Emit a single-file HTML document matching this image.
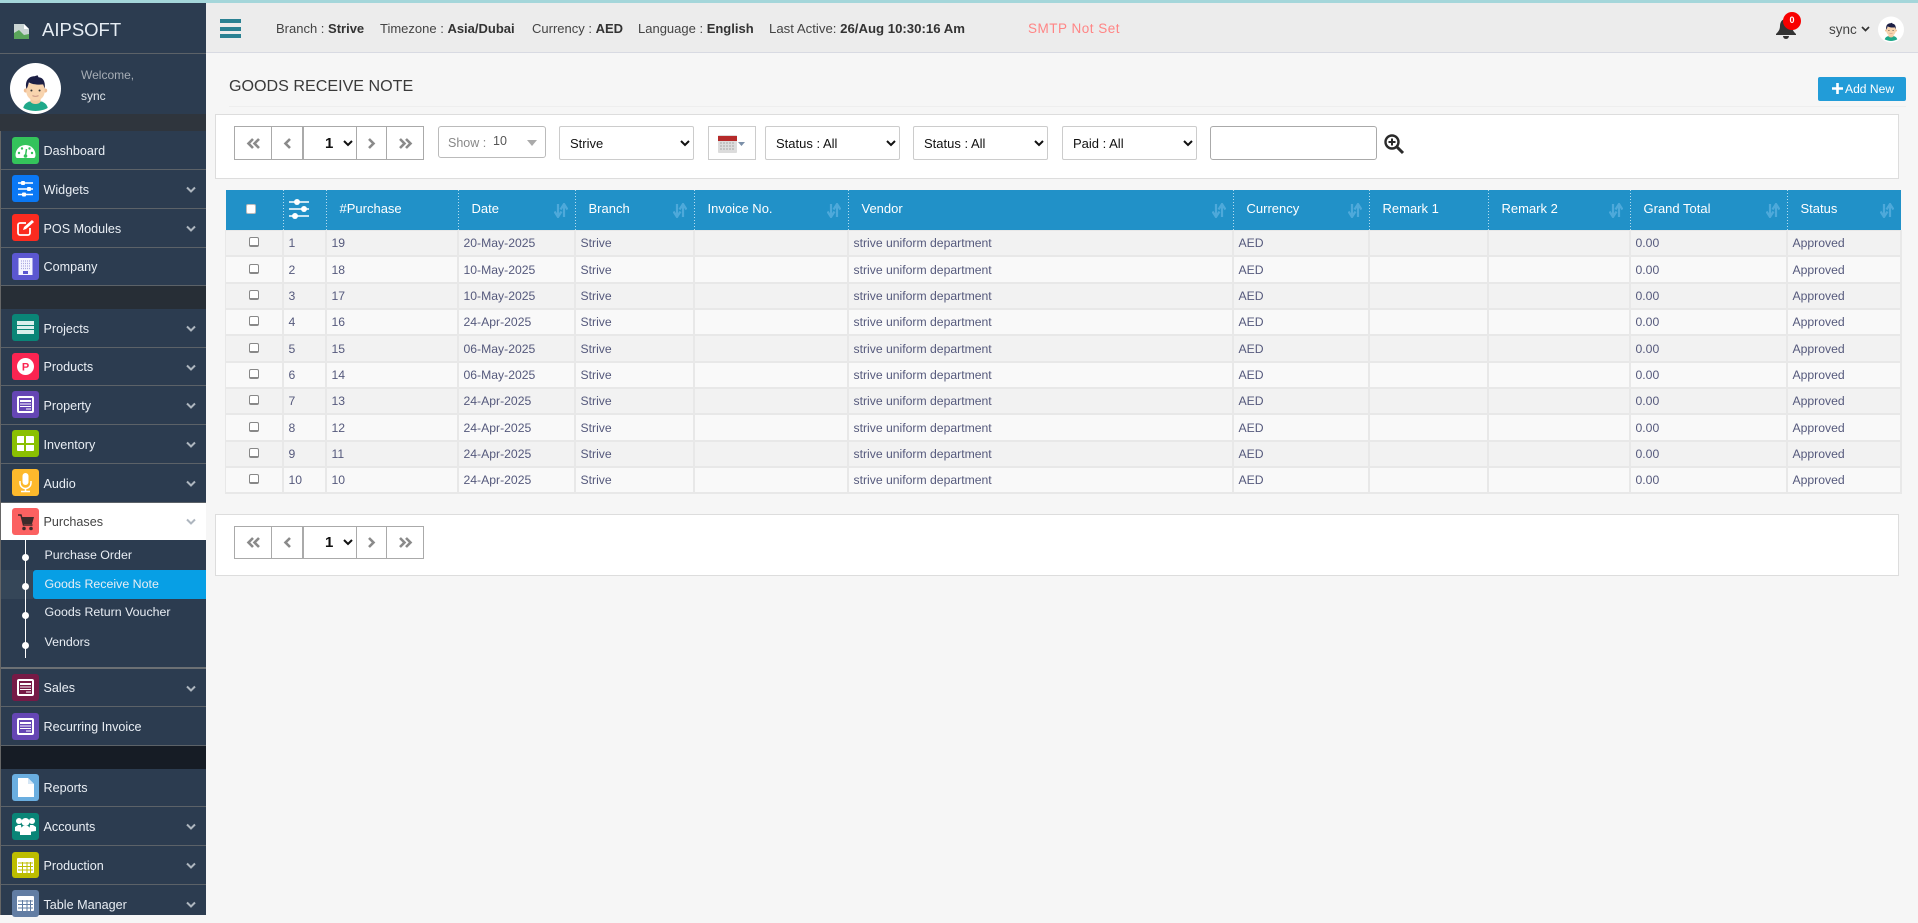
<!DOCTYPE html>
<html><head><meta charset="utf-8"><title>Goods Receive Note</title>
<style>
*{box-sizing:border-box}
html,body{margin:0;padding:0;width:1918px;height:915px;overflow:hidden;background:#f6f6f6;font-family:"Liberation Sans",sans-serif;color:#333}
.a{position:absolute}
#sb{position:absolute;left:0;top:3px;width:206px;height:912px;background:#2c3c50}
.m{position:absolute;left:1px;width:205px;border-bottom:1px solid #5c6268;background:#2c3c50;color:#e9eef4;font-size:12.6px}
.m .t{position:absolute;left:42.5px;top:0;bottom:0;padding-top:1px;display:flex;align-items:center;white-space:nowrap}
.ic{position:absolute;left:11px;top:5px;width:27px;height:27px;border-radius:3px}
.ic svg{position:absolute;left:0;top:0;width:27px;height:27px}
.cv{position:absolute;left:185px;top:16px;width:10px;height:7px}
.sub{position:absolute;left:44.500px;color:#e9eef4;font-size:12.400px;white-space:nowrap}
.tb{position:absolute;top:21px;font-size:13px;color:#444;white-space:nowrap}
.tb b{color:#333}
.pg{position:absolute;height:34px;background:#fff;border:1px solid #aaa;display:flex;align-items:center;justify-content:center}
select{position:absolute;height:34px;background:#fff;border:1px solid #ccc;border-radius:2px;font:13px "Liberation Sans",sans-serif;color:#111;padding-left:6px}
table{position:absolute;left:225px;top:190px;width:1675px;table-layout:fixed;border-collapse:collapse;font-size:12.2px;color:#55597c}
th{height:40px;background:#2191c8;color:#fff;font-weight:normal;font-size:13px;text-align:left;padding:0 0 2px 14px;position:relative}
th::before{content:"";position:absolute;left:0;top:0;width:1px;height:40px;background:repeating-linear-gradient(#b5dcf0 0 1px,transparent 1px 3px)}
th:first-child::before{display:none}
td{height:26.35px;padding:0 0 0 5px;border:1px solid #e8e8e8;border-width:1px 2px 2px 1px;white-space:nowrap;overflow:hidden}
tr:nth-child(odd) td{background:#f2f2f2}
tr:nth-child(even) td{background:#f9f9f9}
td:first-child{text-align:center;padding:0}
.cb{display:inline-block;width:10px;height:10px;border:1px solid #888;border-bottom-width:2px;border-radius:2px;background:#fff;vertical-align:-1px;position:relative;top:-1px}
.so{position:absolute;right:7px;top:13px;width:14px;height:15px}
</style></head><body>
<svg width="0" height="0" style="position:absolute">
<defs>
<symbol id="av" viewBox="0 0 50 50">
<circle cx="25" cy="25" r="25" fill="#fff"/>
<path d="M13 44c1-5 6-7 12-7s11 2 12 7c-3 2-8 3-12 3s-9-1-12-3z" fill="#1fa98a"/>
<path d="M20 33h10v5c-2 3-8 3-10 0z" fill="#f3c9a0"/>
<circle cx="15.500" cy="27" r="2" fill="#eebd94"/><circle cx="34.500" cy="27" r="2" fill="#eebd94"/>
<path d="M16 20h18v8c0 5-4 9-9 9s-9-4-9-9z" fill="#f8d4ae"/>
<path d="M16 25c-1.500-7 2-12 8-12l3-1 1 2c4 0 7 4 6 11l-1.500-4c-5 .5-11 0-14-2-.5 2-1 4-2 6z" fill="#1c1f45"/>
<circle cx="21" cy="27" r="1" fill="#333"/><circle cx="29" cy="27" r="1" fill="#333"/>
<path d="M22 32q3 1.500 6 0" stroke="#c98" fill="none"/>
</symbol>
<symbol id="cv" viewBox="0 0 10 7"><path d="M1 1.500l4 4 4-4" fill="none" stroke="#aeb6bf" stroke-width="2"/></symbol>
<symbol id="so" viewBox="0 0 14 15"><path d="M4 1v11M.5 8.500L4 14l3.500-5.500M10 14V3M6.500 6.500L10 1l3.500 5.500" fill="none" stroke="#4ea9da" stroke-width="2.200"/></symbol>
<symbol id="doc" viewBox="0 0 27 27"><rect x="6" y="6" width="15" height="15" rx="1" fill="none" stroke="#fff" stroke-width="2"/><path d="M8 9h11v2H8z" fill="#fff"/><path d="M8 13h11M8 15.500h11M14 18h5" stroke="#fff"/></symbol>
</defs></svg>

<div class="a" style="left:0;top:0;width:1918px;height:3px;background:#a4d6da"></div>

<!-- Sidebar -->
<div id="sb"></div>
<svg class="a" style="left:14px;top:24px" width="15" height="15" viewBox="0 0 15 15"><path d="M0 0h10l5 5v10H0z" fill="#c9d4d2"/><path d="M0 15V9l5-3 5 5 5-1v5z" fill="#5aa55a"/><path d="M10 0v5h5z" fill="#fff"/></svg>
<div class="a" style="left:42px;top:19px;font-size:18.500px;color:#e6edf4">AIPSOFT</div>
<div class="a" style="left:0;top:53px;width:206px;height:1px;background:#5c6268"></div>
<svg class="a" style="left:10px;top:63px" width="51" height="51"><use href="#av"/></svg>
<div class="a" style="left:81px;top:68px;font-size:12px;color:#a6adb5">Welcome,</div>
<div class="a" style="left:81px;top:89px;font-size:12px;color:#dfe5ea">sync</div>
<div class="a" style="left:0;top:114px;width:206px;height:17px;background:#2f353d"></div>
<div class="a" style="left:0;top:286px;width:206px;height:23px;background:#272e36"></div>
<div class="a" style="left:0;top:746px;width:206px;height:23px;background:#161c25"></div>
<div class="a" style="left:0;top:131px;width:1px;height:530px;background:#666"></div>
<div class="a" style="left:0;top:660px;width:1px;height:255px;background:#666"></div>

<div class="m" style="top:131px;height:39px"><div class="ic" style="background:#34c35b;top:6px"><svg viewBox="0 0 27 27"><path d="M3.500 18a10 10 0 0 1 20 0c0 1-.5 3-1.500 3H5c-1 0-1.500-2-1.500-3z" fill="#fff"/><path d="M13.500 19l1-7" stroke="#34c35b" stroke-width="1.500"/><circle cx="13.500" cy="19" r="1.800" fill="#34c35b"/><circle cx="7" cy="16" r="1.200" fill="#34c35b"/><circle cx="20" cy="16" r="1.200" fill="#34c35b"/><circle cx="10" cy="11.500" r="1.200" fill="#34c35b"/><circle cx="17.500" cy="11.500" r="1.200" fill="#34c35b"/></svg></div><div class="t">Dashboard</div></div>
<div class="m" style="top:170px;height:39px"><div class="ic" style="background:#0a78f5"><svg viewBox="0 0 27 27"><path d="M6 8h15M6 14h15M6 19.500h15" stroke="#fff" stroke-width="1.500"/><rect x="9" y="6" width="4" height="4" rx="1" fill="#fff"/><rect x="15" y="12" width="4" height="4" rx="1" fill="#fff"/><rect x="10" y="17.500" width="4" height="4" rx="1" fill="#fff"/></svg></div><div class="t">Widgets</div><svg class="cv"><use href="#cv"/></svg></div>
<div class="m" style="top:209px;height:39px"><div class="ic" style="background:#fb2b20"><svg viewBox="0 0 27 27"><path d="M18 14v5a2 2 0 0 1-2 2H8a2 2 0 0 1-2-2v-8a2 2 0 0 1 2-2h6" fill="none" stroke="#fff" stroke-width="1.800"/><path d="M11 16l1-3 8-7 2 2-8 7z" fill="#fff"/></svg></div><div class="t">POS Modules</div><svg class="cv"><use href="#cv"/></svg></div>
<div class="m" style="top:248px;height:38px"><div class="ic" style="background:#5b57d1"><svg viewBox="0 0 27 27"><rect x="6.500" y="5" width="14" height="17" fill="#f4f4ff"/><path d="M9 8h9M9 10.500h9M9 13h9M9 15.500h9" stroke="#aaa8e0" stroke-width="1.200" stroke-dasharray="1 1"/><rect x="11" y="18" width="5" height="3" fill="#5b57d1"/></svg></div><div class="t">Company</div></div>

<div class="m" style="top:309px;height:39px"><div class="ic" style="background:#0a8577"><svg viewBox="0 0 27 27"><path d="M5 7h17v4H5zM5 12h17v3H5zM5 16h17v4H5z" fill="#d9efec"/></svg></div><div class="t">Projects</div><svg class="cv"><use href="#cv"/></svg></div>
<div class="m" style="top:348px;height:38px"><div class="ic" style="background:#fb2451"><svg viewBox="0 0 27 27"><circle cx="13.500" cy="13.500" r="8.500" fill="#fff"/><text x="13.500" y="17.500" text-anchor="middle" font-family="Liberation Sans" font-weight="bold" font-size="11" fill="#fb2451">P</text></svg></div><div class="t">Products</div><svg class="cv"><use href="#cv"/></svg></div>
<div class="m" style="top:386px;height:39px"><div class="ic" style="background:#6546b4"><svg><use href="#doc"/></svg></div><div class="t">Property</div><svg class="cv"><use href="#cv"/></svg></div>
<div class="m" style="top:425px;height:39px"><div class="ic" style="background:#8ac002;top:5px"><svg viewBox="0 0 27 27"><path d="M5 7a1 1 0 0 1 1-1h6v7H5zM14 6h7a1 1 0 0 1 1 1v6h-8zM5 15h7v6H6a1 1 0 0 1-1-1zM14 15h8v5a1 1 0 0 1-1 1h-7z" fill="#fff"/></svg></div><div class="t">Inventory</div><svg class="cv"><use href="#cv"/></svg></div>
<div class="m" style="top:464px;height:39px"><div class="ic" style="background:#fdb92c"><svg viewBox="0 0 27 27"><rect x="10.500" y="4" width="6" height="12" rx="3" fill="#fff"/><path d="M8 12v2a5.500 5.500 0 0 0 11 0v-2M13.500 19.500V22M9 22.500h9" fill="none" stroke="#fff" stroke-width="1.500"/></svg></div><div class="t">Audio</div><svg class="cv"><use href="#cv"/></svg></div>
<div class="m" style="top:503px;height:37px;background:#fff;color:#444;border:0"><div class="ic" style="background:#fb6161"><svg viewBox="0 0 27 27"><path d="M6 7h3l1 2h12l-2 7H11L9 8" fill="#3c2b2b"/><path d="M6 7h3l2.500 10h9" fill="none" stroke="#3c2b2b" stroke-width="1.500"/><circle cx="12" cy="20.500" r="1.800" fill="#3c2b2b"/><circle cx="19" cy="20.500" r="1.800" fill="#3c2b2b"/></svg></div><div class="t" style="padding-top:0">Purchases</div><svg class="cv" style="top:15px"><use href="#cv"/></svg></div>

<div class="a" style="left:1px;top:570px;width:32px;height:29px;background:#354658"></div>
<div class="a" style="left:33px;top:570px;width:173px;height:29px;background:#079fe5;border-radius:3px 0 0 3px"></div>
<div class="a" style="left:25px;top:540px;width:1px;height:118px;background:#fff"></div>
<div class="a" style="left:22px;top:554px;width:7px;height:7px;border-radius:50%;background:#fff"></div>
<div class="a" style="left:22px;top:583px;width:7px;height:7px;border-radius:50%;background:#fff"></div>
<div class="a" style="left:22px;top:612px;width:7px;height:7px;border-radius:50%;background:#fff"></div>
<div class="a" style="left:22px;top:642px;width:7px;height:7px;border-radius:50%;background:#fff"></div>
<div class="sub" style="top:548px">Purchase Order</div>
<div class="sub" style="top:577px">Goods Receive Note</div>
<div class="sub" style="top:605px">Goods Return Voucher</div>
<div class="sub" style="top:635px">Vendors</div>
<div class="a" style="left:1px;top:667px;width:205px;height:2px;background:#6c7074"></div>

<div class="m" style="top:669px;height:38px"><div class="ic" style="background:#761a46"><svg><use href="#doc"/></svg></div><div class="t" style="padding-top:0">Sales</div><svg class="cv"><use href="#cv"/></svg></div>
<div class="m" style="top:707px;height:39px"><div class="ic" style="background:#6546b4;top:6px"><svg><use href="#doc"/></svg></div><div class="t">Recurring Invoice</div></div>
<div class="m" style="top:769px;height:38px"><div class="ic" style="background:#6aaee0"><svg viewBox="0 0 27 27"><path d="M6 4h10l6 6v13H6z" fill="#fff"/><path d="M16 4l6 6h-6z" fill="#d4e6f5"/></svg></div><div class="t" style="padding-top:0">Reports</div></div>
<div class="m" style="top:807px;height:39px"><div class="ic" style="background:#0a8577;top:6px"><svg viewBox="0 0 27 27"><circle cx="7" cy="8" r="3" fill="#fff"/><circle cx="20" cy="8" r="3" fill="#fff"/><circle cx="13.500" cy="9" r="4" fill="#fff"/><path d="M3 18v-4l3-2h3l1 7zM24 18v-4l-3-2h-3l-1 7z" fill="#fff"/><path d="M8 22v-6l3-3h5l3 3v6z" fill="#fff"/></svg></div><div class="t">Accounts</div><svg class="cv"><use href="#cv"/></svg></div>
<div class="m" style="top:846px;height:39px"><div class="ic" style="background:#bcbd00;top:6px;height:26px"><svg viewBox="0 0 27 27"><rect x="5" y="6" width="17" height="15" rx="1" fill="#fff"/><path d="M6 11h15M6 14.500h15M6 18h15M10.500 10v11M15 10v11M18.500 10v11" stroke="#bcbd00"/></svg></div><div class="t">Production</div><svg class="cv"><use href="#cv"/></svg></div>
<div class="m" style="top:885px;height:30px;border:0"><div class="ic" style="background:#627da3"><svg viewBox="0 0 27 27"><rect x="5" y="6" width="17" height="15" rx="1" fill="#fff"/><path d="M6 11h15M6 14.500h15M6 18h15M10.500 10v11M15 10v11M18.500 10v11" stroke="#627da3"/></svg></div><div class="t" style="bottom:0;top:0;height:38px">Table Manager</div><svg class="cv"><use href="#cv"/></svg></div>

<!-- Topbar -->
<div class="a" style="left:206px;top:3px;width:1712px;height:50px;background:#ececec;border-bottom:1px solid #d8dae2"></div>
<div class="a" style="left:220px;top:19px;width:21px;height:4px;background:#2a8192"></div>
<div class="a" style="left:220px;top:27px;width:21px;height:4px;background:#2a8192"></div>
<div class="a" style="left:220px;top:34px;width:21px;height:4px;background:#2a8192"></div>
<div class="tb" style="left:276px">Branch : <b>Strive</b></div>
<div class="tb" style="left:380px">Timezone : <b>Asia/Dubai</b></div>
<div class="tb" style="left:532px">Currency : <b>AED</b></div>
<div class="tb" style="left:638px">Language : <b>English</b></div>
<div class="tb" style="left:769px;font-size:13.200px">Last Active: <b>26/Aug 10:30:16 Am</b></div>
<div class="a" style="left:1028px;top:21px;font-size:13.500px;color:#ff8585;letter-spacing:.5px;white-space:nowrap">SMTP Not Set</div>
<svg class="a" style="left:1775px;top:18px" width="23" height="21" viewBox="0 0 23 21"><path d="M11 1c-4 0-6 3-6 7 0 4-2 6-4 8v1h20v-1c-2-2-4-4-4-8 0-4-2-7-6-7z" fill="#333"/><path d="M8 18a3 3 0 0 0 6 0z" fill="#333"/></svg>
<div class="a" style="left:1783px;top:12px;width:18px;height:18px;border-radius:50%;background:#f80000;color:#fff;font-size:9px;font-weight:bold;text-align:center;line-height:17px">0</div>
<div class="a" style="left:1829px;top:22px;font-size:13.500px;color:#444">sync</div>
<svg class="a" style="left:1861px;top:26px" width="9" height="6" viewBox="0 0 9 6"><path d="M1 1l3.500 3.500L8 1" fill="none" stroke="#333" stroke-width="1.700"/></svg>
<svg class="a" style="left:1878px;top:16px" width="26" height="27"><use href="#av"/></svg>

<!-- Heading -->
<div class="a" style="left:229px;top:77px;font-size:16.100px;color:#3a3a3a;white-space:nowrap">GOODS RECEIVE NOTE</div>
<div class="a" style="left:229px;top:106px;width:1677px;height:1px;background:#eeeeee"></div>
<div class="a" style="left:1818px;top:77px;width:88px;height:24px;background:#229cd8;border-radius:2px"></div>
<svg class="a" style="left:1832px;top:83px" width="11" height="11" viewBox="0 0 11 11"><path d="M5.500 0v11M0 5.500h11" stroke="#fff" stroke-width="2.600"/></svg>
<div class="a" style="left:1845px;top:77px;color:#fff;font-size:12.100px;line-height:24px;white-space:nowrap">Add New</div>

<!-- Toolbar panel -->
<div class="a" style="left:215px;top:114px;width:1684px;height:65px;background:#fff;border:1px solid #ddd"></div>
<div class="pg" style="left:234px;top:126px;width:38px"><svg width="15" height="11" viewBox="0 0 15 11"><path d="M7 1L2.500 5.500 7 10M13 1L8.500 5.500 13 10" fill="none" stroke="#8a8a8a" stroke-width="2.600"/></svg></div>
<div class="pg" style="left:271px;top:126px;width:33px;border-right-width:2px"><svg width="9" height="11" viewBox="0 0 9 11"><path d="M7 1L2.500 5.500 7 10" fill="none" stroke="#8a8a8a" stroke-width="2.600"/></svg></div>
<select style="left:303px;top:126px;width:54px;border-color:#aaa;border-radius:0;font-size:15px;font-weight:bold;padding-left:17px"><option>1</option></select>
<div class="pg" style="left:356px;top:126px;width:31px"><svg width="9" height="11" viewBox="0 0 9 11"><path d="M2 1l4.500 4.500L2 10" fill="none" stroke="#8a8a8a" stroke-width="2.600"/></svg></div>
<div class="pg" style="left:386px;top:126px;width:38px"><svg width="15" height="11" viewBox="0 0 15 11"><path d="M2 1l4.500 4.500L2 10M8 1l4.500 4.500L8 10" fill="none" stroke="#8a8a8a" stroke-width="2.600"/></svg></div>

<div class="a" style="left:438px;top:126px;width:108px;height:32px;background:#fff;border:1px solid #bbb;border-radius:3px"></div>
<div class="a" style="left:448px;top:136px;font-size:12.500px;color:#888">Show :</div>
<div class="a" style="left:493px;top:134px;font-size:12.500px;color:#555">10</div>
<div class="a" style="left:527px;top:140px;width:0;height:0;border:5px solid transparent;border-top:6px solid #aaa;border-bottom:0"></div>
<select style="left:559px;top:126px;width:135px"><option>Strive</option></select>
<div class="a" style="left:708px;top:126px;width:48px;height:34px;background:#fff;border:1px solid #ccc"></div>
<svg class="a" style="left:718px;top:135px" width="28" height="18" viewBox="0 0 28 18"><rect x="0" y="0" width="19" height="18" rx="1" fill="#dcdcdc"/><rect x="0" y="1" width="19" height="5" fill="#b52a2a"/><path d="M2 8h15M2 11h15M2 14h15" stroke="#a8a8a8" stroke-dasharray="2 1"/><path d="M20 7h7l-3.500 4z" fill="#7b8fa8"/></svg>
<select style="left:765px;top:126px;width:135px;padding-left:6px"><option>Status : All</option></select>
<select style="left:913px;top:126px;width:135px"><option>Status : All</option></select>
<select style="left:1062px;top:126px;width:135px"><option>Paid : All</option></select>
<div class="a" style="left:1210px;top:126px;width:167px;height:34px;background:#fff;border:1px solid #aaa;border-radius:3px"></div>
<svg class="a" style="left:1383px;top:133px" width="22" height="22" viewBox="0 0 22 22"><circle cx="9" cy="9" r="6.500" fill="none" stroke="#2a2a2a" stroke-width="2.400"/><path d="M14 14l6 6" stroke="#2a2a2a" stroke-width="3"/><path d="M5.500 9h7M9 5.500v7" stroke="#2a2a2a" stroke-width="2"/></svg>

<!-- Table -->
<table>
<colgroup><col style="width:57px"><col style="width:43px"><col style="width:132px"><col style="width:117px"><col style="width:119px"><col style="width:154px"><col style="width:385px"><col style="width:136px"><col style="width:119px"><col style="width:142px"><col style="width:157px"><col style="width:114px"></colgroup>
<thead><tr>
<th style="padding:0"><span class="a" style="left:20px;top:14px;width:10px;height:10px;background:#fff;border:1px solid #bbb;border-radius:2px"></span></th>
<th style="padding:0"><svg class="a" style="left:5px;top:8px" width="22" height="22" viewBox="0 0 22 22"><path d="M1 4h20M1 11h20M1 18h20" stroke="#fff" stroke-width="1.400"/><circle cx="9" cy="4" r="3" fill="#fff"/><circle cx="16" cy="11" r="3" fill="#fff"/><circle cx="7" cy="18" r="3" fill="#fff"/></svg></th>
<th>#Purchase</th>
<th>Date<svg class="so"><use href="#so"/></svg></th>
<th>Branch<svg class="so"><use href="#so"/></svg></th>
<th>Invoice No.<svg class="so"><use href="#so"/></svg></th>
<th>Vendor<svg class="so"><use href="#so"/></svg></th>
<th>Currency<svg class="so"><use href="#so"/></svg></th>
<th>Remark 1</th>
<th>Remark 2<svg class="so"><use href="#so"/></svg></th>
<th>Grand Total<svg class="so"><use href="#so"/></svg></th>
<th>Status<svg class="so"><use href="#so"/></svg></th>
</tr></thead>
<tbody>
<tr><td><span class="cb"></span></td><td>1</td><td>19</td><td>20-May-2025</td><td>Strive</td><td></td><td>strive uniform department</td><td>AED</td><td></td><td></td><td>0.00</td><td>Approved</td></tr>
<tr><td><span class="cb"></span></td><td>2</td><td>18</td><td>10-May-2025</td><td>Strive</td><td></td><td>strive uniform department</td><td>AED</td><td></td><td></td><td>0.00</td><td>Approved</td></tr>
<tr><td><span class="cb"></span></td><td>3</td><td>17</td><td>10-May-2025</td><td>Strive</td><td></td><td>strive uniform department</td><td>AED</td><td></td><td></td><td>0.00</td><td>Approved</td></tr>
<tr><td><span class="cb"></span></td><td>4</td><td>16</td><td>24-Apr-2025</td><td>Strive</td><td></td><td>strive uniform department</td><td>AED</td><td></td><td></td><td>0.00</td><td>Approved</td></tr>
<tr><td><span class="cb"></span></td><td>5</td><td>15</td><td>06-May-2025</td><td>Strive</td><td></td><td>strive uniform department</td><td>AED</td><td></td><td></td><td>0.00</td><td>Approved</td></tr>
<tr><td><span class="cb"></span></td><td>6</td><td>14</td><td>06-May-2025</td><td>Strive</td><td></td><td>strive uniform department</td><td>AED</td><td></td><td></td><td>0.00</td><td>Approved</td></tr>
<tr><td><span class="cb"></span></td><td>7</td><td>13</td><td>24-Apr-2025</td><td>Strive</td><td></td><td>strive uniform department</td><td>AED</td><td></td><td></td><td>0.00</td><td>Approved</td></tr>
<tr><td><span class="cb"></span></td><td>8</td><td>12</td><td>24-Apr-2025</td><td>Strive</td><td></td><td>strive uniform department</td><td>AED</td><td></td><td></td><td>0.00</td><td>Approved</td></tr>
<tr><td><span class="cb"></span></td><td>9</td><td>11</td><td>24-Apr-2025</td><td>Strive</td><td></td><td>strive uniform department</td><td>AED</td><td></td><td></td><td>0.00</td><td>Approved</td></tr>
<tr><td><span class="cb"></span></td><td>10</td><td>10</td><td>24-Apr-2025</td><td>Strive</td><td></td><td>strive uniform department</td><td>AED</td><td></td><td></td><td>0.00</td><td>Approved</td></tr>
</tbody></table>

<!-- Bottom panel -->
<div class="a" style="left:215px;top:514px;width:1684px;height:62px;background:#fff;border:1px solid #ddd"></div>
<div class="pg" style="left:234px;top:526px;width:38px;height:33px"><svg width="15" height="11" viewBox="0 0 15 11"><path d="M7 1L2.500 5.500 7 10M13 1L8.500 5.500 13 10" fill="none" stroke="#8a8a8a" stroke-width="2.600"/></svg></div>
<div class="pg" style="left:271px;top:526px;width:33px;height:33px;border-right-width:2px"><svg width="9" height="11" viewBox="0 0 9 11"><path d="M7 1L2.500 5.500 7 10" fill="none" stroke="#8a8a8a" stroke-width="2.600"/></svg></div>
<select style="left:303px;top:526px;width:54px;height:33px;border-color:#aaa;border-radius:0;font-size:15px;font-weight:bold;padding-left:17px"><option>1</option></select>
<div class="pg" style="left:356px;top:526px;width:31px;height:33px"><svg width="9" height="11" viewBox="0 0 9 11"><path d="M2 1l4.500 4.500L2 10" fill="none" stroke="#8a8a8a" stroke-width="2.600"/></svg></div>
<div class="pg" style="left:386px;top:526px;width:38px;height:33px"><svg width="15" height="11" viewBox="0 0 15 11"><path d="M2 1l4.500 4.500L2 10M8 1l4.500 4.500L8 10" fill="none" stroke="#8a8a8a" stroke-width="2.600"/></svg></div>
</body></html>
